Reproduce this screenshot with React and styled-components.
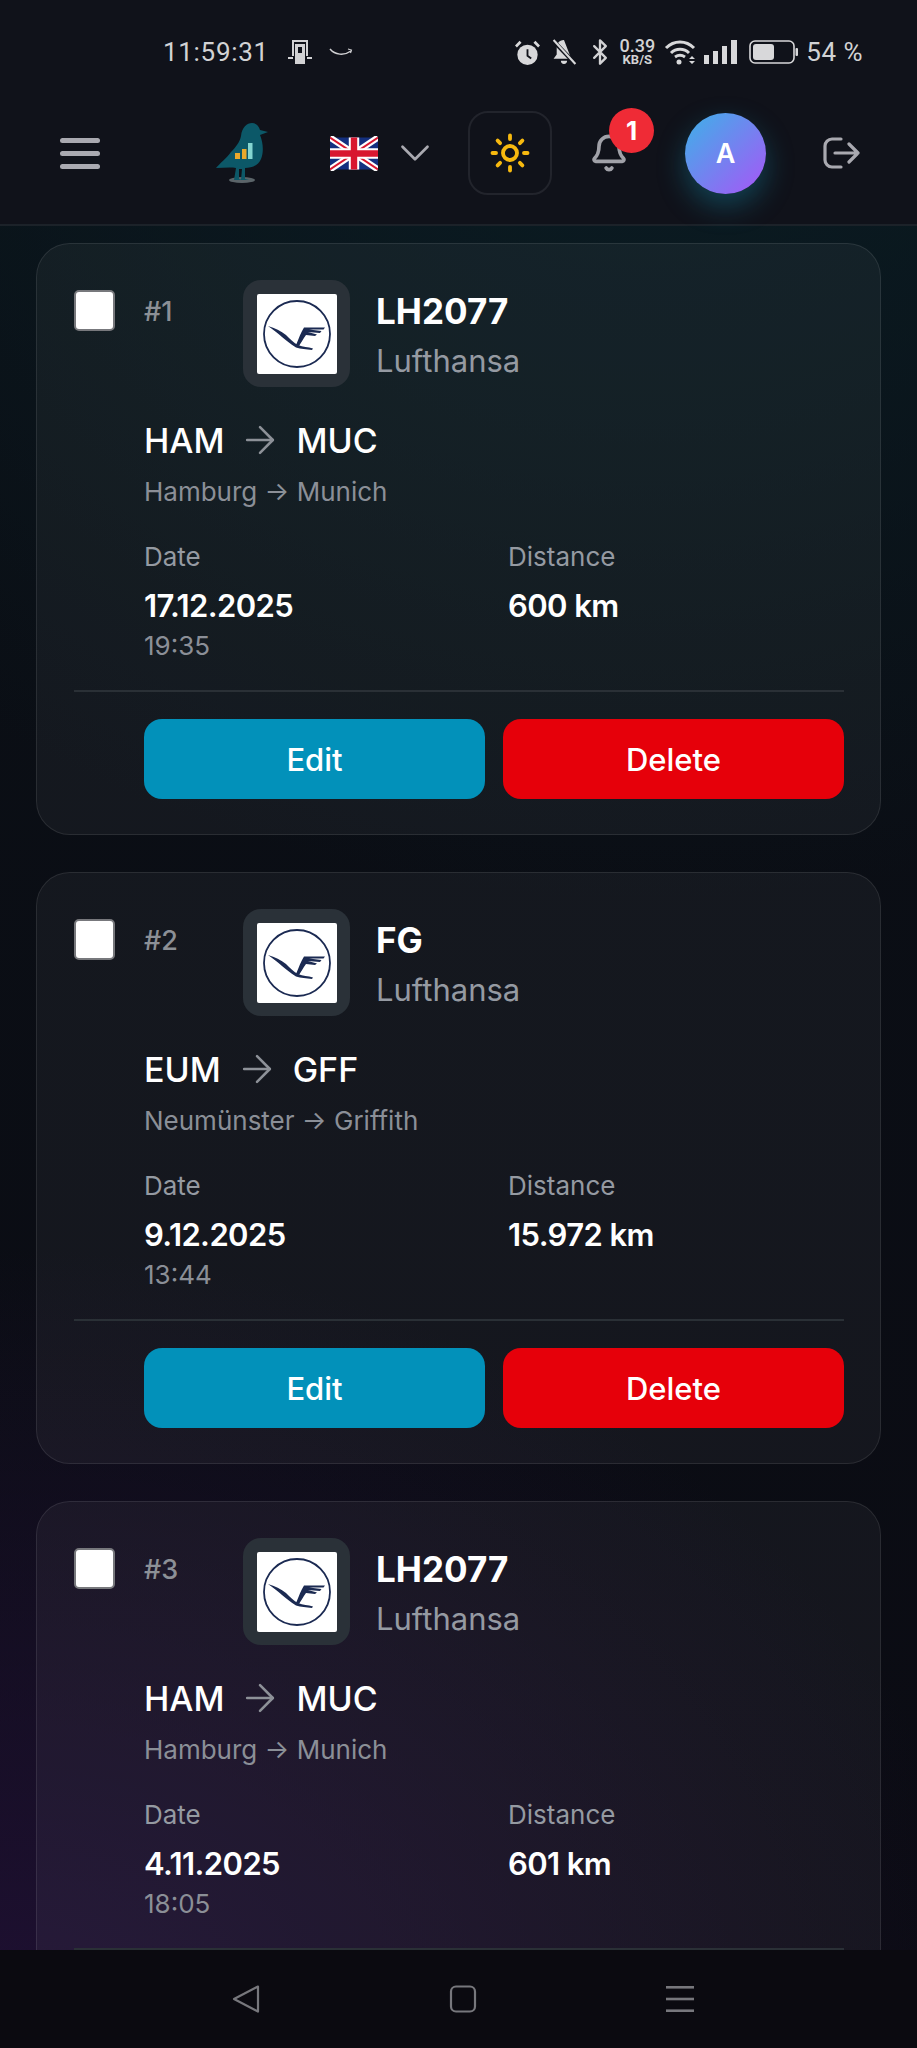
import React from "react";
import styled, { createGlobalStyle } from "styled-components";
import { ArrowRight, Bell, Bluetooth, ChevronDown, Sun } from "lucide-react";

const GlobalStyle = createGlobalStyle`
  html, body {
    margin: 0;
    padding: 0;
    background: #0c0b11;
  }
  * {
    box-sizing: border-box;
  }
`;

const Screen = styled.div`
  width: 917px;
  height: 2048px;
  display: flex;
  flex-direction: column;
  overflow: hidden;
  font-family: Inter, "Liberation Sans", sans-serif;
  color: #fff;
  background:
    radial-gradient(1000px 800px at 0% 100%, #1f1033 0%, rgba(31, 16, 51, 0) 100%),
    radial-gradient(1100px 900px at 70% 0%, #0a1d24 0%, rgba(10, 29, 36, 0) 100%),
    linear-gradient(180deg, #0a1016 0%, #0b0b13 100%);
`;

const StatusBar = styled.div`
  height: 90px;
  flex: none;
  padding: 14px 54px 0 163px;
  display: flex;
  align-items: center;
  background: #10121a;
  color: #d2d2d4;
  font-family: Roboto, "Noto Sans", sans-serif;
  font-size: 26px;
`;

const StatusLeft = styled.div`
  display: flex;
  align-items: center;
  gap: 17px;
  flex: 1;
`;

const StatusRight = styled.div`
  display: flex;
  align-items: center;
`;

const StatusIcon = styled.svg`
  display: block;
  flex: none;
  margin-left: ${(p) => p.$gap || 0}px;
`;

const Clock = styled.span`
  letter-spacing: 0.7px;
  margin-right: 2px;
`;

const Speed = styled.div`
  display: flex;
  flex-direction: column;
  align-items: center;
  width: 38px;
  margin-left: 4px;
  font-size: 18px;
  font-weight: 500;
  line-height: 16px;
  span:last-child {
    font-size: 13px;
    font-weight: 700;
    line-height: 12px;
  }
`;

const Percent = styled.span`
  margin-left: 8px;
  letter-spacing: 0.5px;
`;

const TopBar = styled.header`
  height: 136px;
  flex: none;
  padding: 0 57px 8px 60px;
  display: flex;
  align-items: center;
  background: #10121a;
  border-bottom: 2px solid #1c2229;
`;

const Burger = styled.div`
  width: 40px;
  display: flex;
  flex-direction: column;
  gap: 8px;
  span {
    height: 5px;
    border-radius: 3px;
    background: #a9a9b0;
  }
`;

const BirdMark = styled.svg`
  width: 55px;
  height: 62px;
  margin-left: 115px;
`;

const Flag = styled.svg`
  width: 48px;
  height: 35px;
  margin-left: 60px;
`;

const Chevron = styled(ChevronDown)`
  margin-left: 12px;
  color: #a9a9b0;
`;

const ThemeBox = styled.div`
  width: 84px;
  height: 84px;
  margin-left: 28px;
  border: 2px solid #22242c;
  border-radius: 20px;
  display: flex;
  align-items: center;
  justify-content: center;
  color: #f7b90f;
`;

const BellWrap = styled.div`
  position: relative;
  margin-left: 37px;
  width: 40px;
  height: 40px;
  color: #a0a1a8;
`;

const Badge = styled.span`
  position: absolute;
  left: 20px;
  top: -25px;
  width: 45px;
  height: 45px;
  border-radius: 50%;
  background: #ef2b36;
  color: #fff;
  font-size: 26px;
  font-weight: 700;
  display: flex;
  align-items: center;
  justify-content: center;
`;

const Avatar = styled.div`
  width: 81px;
  height: 81px;
  margin-left: 56px;
  border-radius: 50%;
  background: linear-gradient(135deg, #3cb2e8 0%, #a855f7 100%);
  box-shadow: 0 12px 28px rgba(20, 140, 170, 0.4);
  display: flex;
  align-items: center;
  justify-content: center;
  font-size: 27px;
  font-weight: 600;
`;

const ExitIcon = styled.svg`
  margin-left: auto;
  color: #a9a9b0;
`;

const Content = styled.main`
  flex: 1;
  min-height: 0;
  overflow: hidden;
  padding: 17px 36px 0;
  display: flex;
  flex-direction: column;
  gap: 37px;
`;

const Card = styled.article`
  flex: none;
  height: 592px;
  padding: 36px 36px 0 37px;
  border: 1px solid rgba(255, 255, 255, 0.09);
  border-radius: 34px;
  background: rgba(255, 255, 255, 0.045);
`;

const CardTop = styled.div`
  display: flex;
  align-items: flex-start;
`;

const Check = styled.input.attrs({ type: "checkbox" })`
  appearance: none;
  width: 41px;
  height: 41px;
  margin: 10px 0 0;
  flex: none;
  border: 2px solid #77787c;
  border-radius: 5px;
  background: #fff;
`;

const Index = styled.span`
  width: 99px;
  margin: 17px 0 0 29px;
  flex: none;
  font-size: 27px;
  line-height: 30px;
  font-weight: 500;
  color: #8c9096;
`;

const LogoBox = styled.div`
  width: 107px;
  height: 107px;
  flex: none;
  border-radius: 18px;
  background: #2a3138;
  display: flex;
  align-items: center;
  justify-content: center;
`;

const LogoInner = styled.svg`
  width: 80px;
  height: 80px;
  display: block;
  border-radius: 2px;
  background: #fff;
`;

const FlightInfo = styled.div`
  margin: 11px 0 0 26px;
`;

const FlightNo = styled.div`
  font-size: 35px;
  line-height: 40px;
  font-weight: 700;
`;

const Airline = styled.div`
  margin-top: 12px;
  font-size: 31px;
  line-height: 36px;
  color: #959aa2;
`;

const Details = styled.div`
  margin-left: 70px;
`;

const Route = styled.div`
  margin-top: 31px;
  height: 44px;
  display: flex;
  align-items: center;
  gap: 14px;
  font-size: 34px;
  font-weight: 500;
  svg {
    color: #8d9198;
  }
`;

const Cities = styled.div`
  margin-top: 14px;
  font-size: 26px;
  line-height: 32px;
  color: #8b8f97;
`;

const Stats = styled.div`
  margin-top: 33px;
  display: grid;
  grid-template-columns: 336px 336px;
  column-gap: 28px;
`;

const StatLabel = styled.div`
  font-size: 26px;
  line-height: 32px;
  color: #959aa2;
`;

const StatValue = styled.div`
  margin-top: 14px;
  font-size: 31px;
  line-height: 38px;
  font-weight: 600;
  letter-spacing: -0.6px;
`;

const StatNote = styled.div`
  margin-top: 5px;
  font-size: 26px;
  line-height: 32px;
  color: #8b8f97;
`;

const Divider = styled.hr`
  margin: 28px 0 0;
  height: 2px;
  border: 0;
  background: #2a3036;
`;

const Actions = styled.div`
  margin: 27px 0 0 70px;
  display: grid;
  grid-template-columns: 1fr 1fr;
  gap: 18px;
`;

const ActionButton = styled.button`
  height: 80px;
  border: 0;
  border-radius: 18px;
  background: ${(p) => (p.$danger ? "#e6000a" : "#0291ba")};
  color: #fff;
  font-family: inherit;
  font-size: 31px;
  font-weight: 500;
`;

const NavBar = styled.nav`
  height: 98px;
  flex: none;
  padding-left: 8px;
  background: #0b0a10;
  display: flex;
  align-items: center;
  justify-content: center;
  gap: 189px;
  color: #77777c;
`;

const flights = [
  { no: "LH2077", from: "HAM", to: "MUC", cities: "Hamburg → Munich", date: "17.12.2025", time: "19:35", km: "600 km", actions: true },
  { no: "FG", from: "EUM", to: "GFF", cities: "Neumünster → Griffith", date: "9.12.2025", time: "13:44", km: "15.972 km", actions: true },
  // the third card runs under the nav bar, its buttons are never seen
  { no: "LH2077", from: "HAM", to: "MUC", cities: "Hamburg → Munich", date: "4.11.2025", time: "18:05", km: "601 km", actions: false },
];

function CraneLogo() {
  return (
    <LogoInner viewBox="0 0 80 80">
      <circle cx="40" cy="40" r="33" fill="none" stroke="#1b2a52" strokeWidth="1.800" />
      <path
        d="M11 32 C18 34 24 37 29 41 C33 45 37 49 41 51 C46 53 51 53 56 54.500 L55 56 C49 55 44 55 39 53.500 C33 50 29 46 25 43 C21 39 16 36 11 32Z"
        fill="#1b2a52"
      />
      <path
        d="M39 51 C42 44 44 38 47 33.500 L68 33.500 L66.500 35.500 L52 35.500 L64.500 37 L63 39 L51 38 L60 40.500 L58 42 L49 41 C46 45 44 49 42 52Z"
        fill="#1b2a52"
      />
    </LogoInner>
  );
}

function FlightCard({ flight, index }) {
  return (
    <Card>
      <CardTop>
        <Check />
        <Index>#{index}</Index>
        <LogoBox>
          <CraneLogo />
        </LogoBox>
        <FlightInfo>
          <FlightNo>{flight.no}</FlightNo>
          <Airline>Lufthansa</Airline>
        </FlightInfo>
      </CardTop>
      <Details>
        <Route>
          <span>{flight.from}</span>
          <ArrowRight size={44} strokeWidth={1.400} />
          <span>{flight.to}</span>
        </Route>
        <Cities>{flight.cities}</Cities>
        <Stats>
          <div>
            <StatLabel>Date</StatLabel>
            <StatValue>{flight.date}</StatValue>
            <StatNote>{flight.time}</StatNote>
          </div>
          <div>
            <StatLabel>Distance</StatLabel>
            <StatValue>{flight.km}</StatValue>
          </div>
        </Stats>
      </Details>
      <Divider />
      {flight.actions && (
        <Actions>
          <ActionButton>Edit</ActionButton>
          <ActionButton $danger>Delete</ActionButton>
        </Actions>
      )}
    </Card>
  );
}

export default function App() {
  return (
    <Screen>
      <GlobalStyle />
      <StatusBar>
        <StatusLeft>
          <Clock>11:59:31</Clock>
          <StatusIcon width="24" height="26" viewBox="0 0 24 26" fill="#d2d2d4">
            <path d="M4 1h16v7h-2V3H6v5H4z" />
            <rect x="7" y="5" width="10" height="20" />
            <rect x="4" y="8" width="2" height="9" />
            <rect x="18" y="8" width="2" height="9" />
            <rect x="0" y="18" width="5" height="2" />
            <rect x="19" y="18" width="5" height="2" />
            <rect x="10" y="8" width="4" height="6" fill="#10121a" />
          </StatusIcon>
          <StatusIcon width="24" height="12" viewBox="0 0 24 12" fill="none" stroke="#d2d2d4" strokeWidth="1.500">
            <path d="M1 3c5 6 14 7 21 2" />
            <path d="M19 3l3.500 1-1 3" strokeWidth="1.100" />
          </StatusIcon>
        </StatusLeft>
        <StatusRight>
          <StatusIcon width="25" height="25" viewBox="0 0 27 27" fill="#d8d8da">
            <path d="M13.500 5a11 11 0 1 0 0 22a11 11 0 0 0 0-22z" />
            <path d="M13.500 10v7l4 3" fill="none" stroke="#10121a" strokeWidth="2" />
            <path d="M1 7l5-5M26 7l-5-5" stroke="#d8d8da" strokeWidth="3" />
          </StatusIcon>
          <StatusIcon $gap={12} width="25" height="26" viewBox="2 1 23 25" fill="#d8d8da">
            <path d="M13 2c-5 0-7 4-7 8v6l-3 4h17zM10 22h6a3 3 0 0 1-6 0z" />
            <path d="M2 2l22 23" stroke="#10121a" strokeWidth="4" />
            <path d="M3 2l21 23" stroke="#d8d8da" strokeWidth="2" />
          </StatusIcon>
          <StatusIcon as={Bluetooth} $gap={9} size={28} strokeWidth={2} />
          <Speed>
            <span>0.39</span>
            <span>KB/S</span>
          </Speed>
          <StatusIcon $gap={8} width="33" height="26" viewBox="0 0 33 26" fill="none" stroke="#d8d8da" strokeWidth="3">
            <path d="M2 9c8-8 20-8 28 0" />
            <path d="M7 14c5-5 13-5 18 0" />
            <path d="M11 18c3-2 7-2 10 0" />
            <circle cx="15" cy="23" r="2.500" fill="#d8d8da" stroke="none" />
            <path d="M25 20l3-3 3 3zM25 22l3 3 3-3z" fill="#d8d8da" stroke="none" />
          </StatusIcon>
          <StatusIcon $gap={7} width="33" height="24" viewBox="0 0 33 24" fill="#d8d8da">
            <rect x="0" y="15" width="5" height="9" />
            <rect x="9" y="11" width="5" height="13" />
            <rect x="18" y="6" width="5" height="18" />
            <rect x="27" y="0" width="6" height="24" />
          </StatusIcon>
          <StatusIcon $gap={12} width="49" height="24" viewBox="0 0 49 24">
            <rect x="1" y="1" width="44" height="22" rx="5" fill="none" stroke="#d8d8da" strokeWidth="1.600" />
            <rect x="4" y="4" width="21" height="16" rx="3" fill="#d8d8da" />
            <rect x="46.500" y="8" width="2.500" height="8" rx="1" fill="#d8d8da" />
          </StatusIcon>
          <Percent>54 %</Percent>
        </StatusRight>
      </StatusBar>
      <TopBar>
        <Burger>
          <span />
          <span />
          <span />
        </Burger>
        <BirdMark viewBox="0 0 55 62">
          <ellipse cx="27" cy="58" rx="13" ry="3" fill="#5b6469" />
          <path
            d="M26 14C27 5 32 1 37 1C41 1 44 4 45 8L53 10L45 13C48 20 49 30 46 37C43 44 36 46 30 46L30 57L34 58L26 58L27 47L24 47L24 57L28 58L19 58L21 46C15 45 8 46 1 46C5 41 11 37 16 30C20 26 25 20 26 14Z"
            fill="#0c5868"
          />
          <rect x="20" y="31" width="5" height="6" fill="#e9a92c" />
          <rect x="27" y="27" width="4.500" height="10" fill="#e9a92c" />
          <rect x="33" y="21" width="4.500" height="16" fill="#84d5d0" />
        </BirdMark>
        <Flag viewBox="0 0 60 40">
          <rect width="60" height="40" rx="3" fill="#14307f" />
          <path d="M0 0L60 40M60 0L0 40" stroke="#fff" strokeWidth="8" />
          <path d="M0 0L60 40M60 0L0 40" stroke="#d8172f" strokeWidth="2.600" />
          <path d="M30 0V40M0 20H60" stroke="#fff" strokeWidth="13" />
          <path d="M30 0V40M0 20H60" stroke="#d8172f" strokeWidth="8" />
        </Flag>
        <Chevron size={50} strokeWidth={1.300} />
        <ThemeBox>
          <Sun size={42} strokeWidth={2.200} />
        </ThemeBox>
        <BellWrap>
          <Bell size={40} strokeWidth={2.200} />
          <Badge>1</Badge>
        </BellWrap>
        <Avatar>A</Avatar>
        <ExitIcon width="37" height="32" viewBox="0 0 37 32" fill="none" stroke="currentColor" strokeWidth="3.200" strokeLinecap="round" strokeLinejoin="round">
          <path d="M18 2H9a7 7 0 0 0-7 7v14a7 7 0 0 0 7 7h9" />
          <path d="M12 16h23M26 7l9 9-9 9" />
        </ExitIcon>
      </TopBar>
      <Content>
        {flights.map((flight, i) => (
          <FlightCard key={i} flight={flight} index={i + 1} />
        ))}
      </Content>
      <NavBar>
        <svg width="28" height="28" viewBox="0 0 28 28" fill="none" stroke="currentColor" strokeWidth="2.200" strokeLinejoin="round">
          <path d="M26 1.500L2 14l24 12.500z" />
        </svg>
        <svg width="28" height="28" viewBox="0 0 28 28" fill="none" stroke="currentColor" strokeWidth="2.200">
          <rect x="2" y="1.500" width="24" height="25" rx="5" />
        </svg>
        <svg width="28" height="28" viewBox="0 0 28 28" fill="currentColor">
          <rect x="0" y="1" width="28" height="2.600" />
          <rect x="0" y="12.700" width="28" height="2.600" />
          <rect x="0" y="24.400" width="28" height="2.600" />
        </svg>
      </NavBar>
    </Screen>
  );
}
